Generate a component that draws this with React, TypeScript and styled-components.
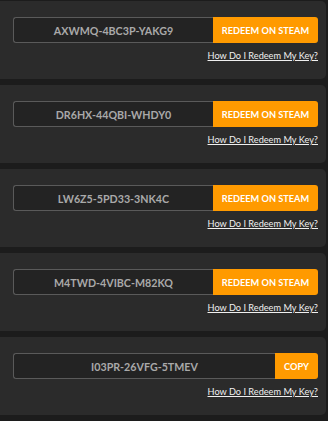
import styled, { createGlobalStyle } from 'styled-components';

const keys = [
  { code: 'AXWMQ-4BC3P-YAKG9', steam: true },
  { code: 'DR6HX-44QBI-WHDY0', steam: true },
  { code: 'LW6Z5-5PD33-3NK4C', steam: true },
  { code: 'M4TWD-4VIBC-M82KQ', steam: true },
  { code: 'I03PR-26VFG-5TMEV', steam: false },
];

function App() {
  return (
    <>
      <Global />
      <List>
        {keys.map((k) => (
          <Card key={k.code}>
            <KeyRow>
              <KeyBox>{k.code}</KeyBox>
              <ActionButton wide={k.steam}>
                {k.steam ? 'REDEEM ON STEAM' : 'COPY'}
              </ActionButton>
            </KeyRow>
            <HelpLink href="#">How Do I Redeem My Key?</HelpLink>
          </Card>
        ))}
      </List>
    </>
  );
}
export default App;

const Global = createGlobalStyle`
  body {
    margin: 0;
    background: #1c1c1c;
    font-family: Lato, "Liberation Sans", sans-serif;
  }
`;

const List = styled.div`
  display: flex;
  flex-direction: column;
  gap: 6px;
  padding-top: 1px;
  width: 326px;
`;

const Card = styled.div`
  background: #2b2b2b;
  border-radius: 0 5px 5px 0;
  height: 78px;
  box-sizing: border-box;
  padding: 16px 8px 0 13px;
  display: flex;
  flex-direction: column;
  align-items: flex-end;
`;

const KeyRow = styled.div`
  display: flex;
  width: 100%;
  height: 26px;
`;

const KeyBox = styled.div`
  flex: 1;
  display: flex;
  align-items: center;
  justify-content: center;
  background: #232323;
  border: 1px solid #5a5a5a;
  border-right: none;
  border-radius: 3px 0 0 3px;
  color: #a9a9a9;
  font-weight: 700;
  font-size: 10.7px;
`;

const ActionButton = styled.button<{ wide: boolean }>`
  width: ${(p) => (p.wide ? '105px' : '43px')};
  border: none;
  background: #ff9a00;
  color: #fff;
  font-family: inherit;
  font-weight: 700;
  font-size: 9.2px;
  padding: 0;
  border-radius: 0 3px 3px 0;
  cursor: pointer;
`;

const HelpLink = styled.a`
  margin-top: 7px;
  font-size: 9.2px;
  color: #f0f0f0;
  text-decoration: underline;
`;
